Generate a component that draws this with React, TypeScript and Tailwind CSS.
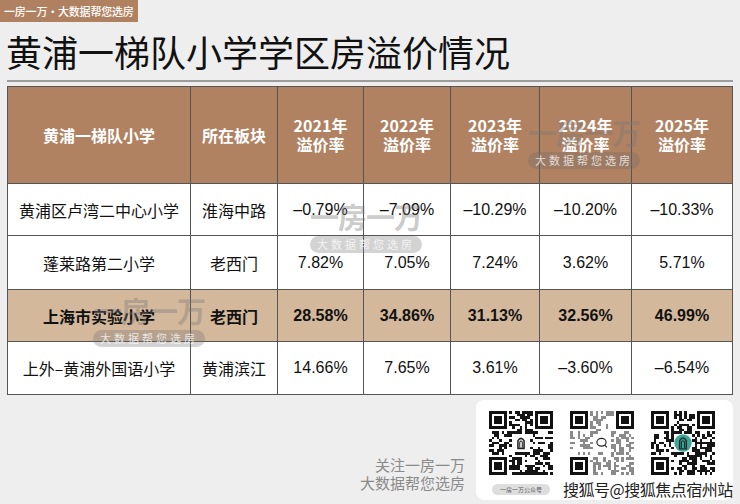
import React from 'react';

const CJK = { fontFamily: '"Noto Sans CJK SC", "Noto Sans", sans-serif' };
const NUM = { fontFamily: '"Liberation Sans", "Noto Sans CJK SC", sans-serif' };

const years = ['2021', '2022', '2023', '2024', '2025'];

const rows = [
  { name: '黄浦区卢湾二中心小学', area: '淮海中路', values: ['–0.79%', '–7.09%', '–10.29%', '–10.20%', '–10.33%'], hl: false },
  { name: '蓬莱路第二小学', area: '老西门', values: ['7.82%', '7.05%', '7.24%', '3.62%', '5.71%'], hl: false },
  { name: '上海市实验小学', area: '老西门', values: ['28.58%', '34.86%', '31.13%', '32.56%', '46.99%'], hl: true },
  { name: '上外–黄浦外国语小学', area: '黄浦滨江', values: ['14.66%', '7.65%', '3.61%', '–3.60%', '–6.54%'], hl: false },
];

const rowHeights = ['h-[51px]', 'h-[53px]', 'h-[51px]', 'h-[52px]'];

// simple seeded random so the QR codes stay the same every render
function makeRng(seed: number) {
  let s = seed;
  return () => {
    s = (s * 1103515245 + 12345) & 0x7fffffff;
    return s / 0x7fffffff;
  };
}

function QrCode({ seed, color, density, center }: { seed: number; color: string; density: number; center: 'plain' | 'chat' | 'teal' }) {
  const n = 25;
  const rand = makeRng(seed);
  const cells: React.ReactNode[] = [];
  const inFinder = (x: number, y: number) =>
    (x < 8 && y < 8) || (x > 16 && y < 8) || (x < 8 && y > 16);
  for (let y = 0; y < n; y++) {
    for (let x = 0; x < n; x++) {
      const r = rand();
      if (inFinder(x, y)) continue;
      if (x > 8 && x < 16 && y > 8 && y < 16) continue;
      if (r < density) cells.push(<rect key={`${x}-${y}`} x={x} y={y} width={1} height={1} fill={color} />);
    }
  }
  const finder = (fx: number, fy: number) => (
    <g key={`f${fx}${fy}`}>
      <rect x={fx} y={fy} width={7} height={7} fill="#111" />
      <rect x={fx + 1} y={fy + 1} width={5} height={5} fill="#fff" />
      <rect x={fx + 2} y={fy + 2} width={3} height={3} fill="#111" />
    </g>
  );
  return (
    <svg width={64} height={64} viewBox="0 0 25 25" shapeRendering="crispEdges">
      <rect width={25} height={25} fill="#fff" />
      {cells}
      {finder(0, 0)}
      {finder(18, 0)}
      {finder(0, 18)}
      {center === 'plain' && (
        <g shapeRendering="auto">
          <rect x={10} y={9.5} width={5} height={6} rx={1} fill="#fff" />
          <path d="M11.3 14.6 V11.6 Q12.5 9.8 13.7 11.6 V14.6 Z" fill="none" stroke="#222" strokeWidth={0.6} />
          <path d="M12 14.3 V12.2 Q12.5 11.3 13 12.2 V14.3" fill="none" stroke="#222" strokeWidth={0.4} />
        </g>
      )}
      {center === 'chat' && (
        <g shapeRendering="auto">
          <circle cx={12.5} cy={12.5} r={3.2} fill="#fff" />
          <ellipse cx={12.3} cy={12.2} rx={1.8} ry={1.5} fill="none" stroke="#222" strokeWidth={0.45} />
          <path d="M13.5 13.2 L14.4 14.2" stroke="#222" strokeWidth={0.45} />
        </g>
      )}
      {center === 'teal' && (
        <g shapeRendering="auto">
          <circle cx={12.5} cy={12.5} r={3.4} fill="#3fa596" />
          <path d="M11.2 14.8 V11.6 Q12.5 9.5 13.8 11.6 V14.8 Z" fill="none" stroke="#1c2a28" strokeWidth={0.55} />
          <path d="M11.9 14.5 V12.1 Q12.5 11.1 13.1 12.1 V14.5" fill="none" stroke="#1c2a28" strokeWidth={0.4} />
        </g>
      )}
    </svg>
  );
}

function Watermark({ className }: { className: string }) {
  return (
    <div className={`absolute pointer-events-none flex flex-col items-center w-[112px] ${className}`} style={CJK}>
      <div className="whitespace-nowrap text-[29px] leading-[32px] tracking-[-1px] font-bold text-[rgba(120,120,120,0.4)]">一房一万</div>
      <div className="mt-[4px] h-[17px] w-[112px] rounded-full bg-[rgba(110,110,110,0.3)] flex items-center justify-center whitespace-nowrap text-[11px] tracking-[3px] text-[rgba(255,255,255,0.75)]">
        大数据帮您选房
      </div>
    </div>
  );
}

export default function App() {
  return (
    <div className="relative w-[740px] h-[504px] overflow-hidden bg-[#eeeeee]" style={CJK}>
      <div className="w-[138px] h-[22px] bg-[#b08160] flex items-center pl-[4px] whitespace-nowrap text-[11px] font-medium text-white tracking-[-0.2px]">
        一房一万·大数据帮您选房
      </div>

      <h1 className="mt-[9px] ml-[6px] text-[36px] leading-[40px] text-[#111] font-normal">
        黄浦一梯队小学学区房溢价情况
      </h1>
      <div className="mx-[7px] mt-[9px] h-[2px] bg-[#9c9c9c]" />

      <div className="mx-[7px] mt-[4px] grid grid-cols-[182px_86px_85px_86px_88px_91px_1fr] gap-[1px] p-[1px] bg-[#555]">
        <div className="h-[96px] bg-[#b08262] flex items-center justify-center text-white text-[16px] font-bold">黄浦一梯队小学</div>
        <div className="h-[96px] bg-[#b08262] flex items-center justify-center text-white text-[16px] font-bold">所在板块</div>
        {years.map((y) => (
          <div key={y} className="h-[96px] bg-[#b08262] flex flex-col items-center justify-center text-white text-[16px] font-bold leading-[19px]">
            <span>{y}年</span>
            <span>溢价率</span>
          </div>
        ))}
        {rows.map((r, i) => {
          const bg = r.hl ? 'bg-[#d4b89b]' : 'bg-white';
          const weight = r.hl ? 'font-bold' : 'font-normal';
          return (
            <React.Fragment key={r.name}>
              <div className={`${rowHeights[i]} ${bg} ${weight} flex items-center justify-center text-[16px] text-[#111]`}>{r.name}</div>
              <div className={`${rowHeights[i]} ${bg} ${weight} flex items-center justify-center text-[16px] text-[#111]`}>{r.area}</div>
              {r.values.map((v, j) => (
                <div key={j} className={`${rowHeights[i]} ${bg} ${weight} flex items-center justify-center text-[16px] text-[#111]`} style={NUM}>
                  {v}
                </div>
              ))}
            </React.Fragment>
          );
        })}
      </div>

      <div className="mt-[5px] mr-[7px] flex justify-end items-end">
        <div className="mb-[8px] mr-[11px] text-right text-[15px] leading-[18px] text-[#8a8a8a]">
          <div>关注一房一万</div>
          <div>大数据帮您选房</div>
        </div>
        <div className="w-[257px] h-[100px] rounded-[8px] bg-white pt-[11px] pl-[13px]">
          <div className="flex gap-[17px]">
            <QrCode seed={7} color="#151515" density={0.5} center="plain" />
            <QrCode seed={31} color="#8a8a8a" density={0.38} center="chat" />
            <QrCode seed={93} color="#151515" density={0.52} center="teal" />
          </div>
          <div className="mt-[4px] flex items-center">
            <div className="ml-[3px] w-[58px] h-[11px] rounded-full bg-[#dedede] flex items-center justify-center whitespace-nowrap text-[6px] text-[#555]">一房一万公众号</div>
            <div className="ml-[13px] text-[16px] leading-[20px] text-[#222] tracking-[-0.5px] whitespace-nowrap">搜狐号@搜狐焦点宿州站</div>
          </div>
        </div>
      </div>

      <Watermark className="left-[310px] top-[200px]" />
      <Watermark className="left-[528px] top-[116px]" />
      <Watermark className="left-[93px] top-[294px]" />
    </div>
  );
}
